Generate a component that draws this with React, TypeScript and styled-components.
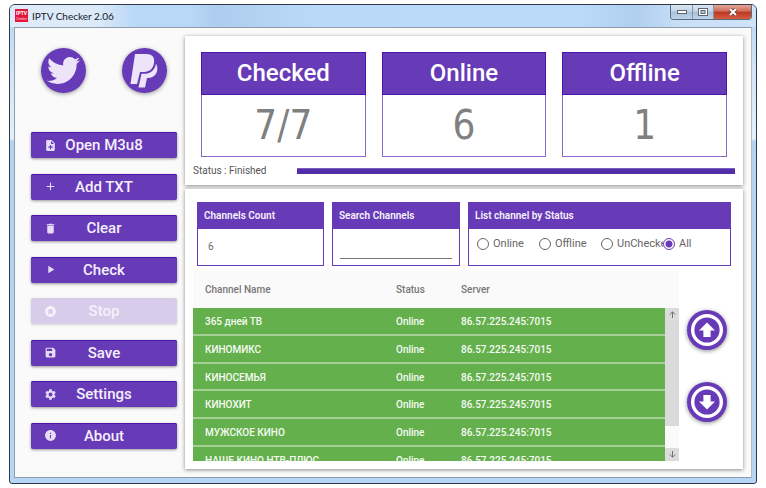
import React from "react";
import styled, { createGlobalStyle, css } from "styled-components";
import {
  MdAdd,
  MdDelete,
  MdInfo,
  MdNoteAdd,
  MdPlayArrow,
  MdSave,
  MdSettings,
  MdStopCircle,
} from "react-icons/md";
import { FaTwitter } from "react-icons/fa";

const purple = "#673ab7";
const edge = "#4c14a8";
const green = "#64b04c";

const GlobalStyle = createGlobalStyle`
  *, *::before, *::after { box-sizing: border-box; }
  body { margin: 0; background: #fff; font-family: Roboto, "Liberation Sans", sans-serif; }
  button, input { font: inherit; }
`;

const Desktop = styled.div`
  height: 100vh;
  padding: 4px 9px;
`;

const Window = styled.div`
  height: 100%;
  display: flex;
  flex-direction: column;
  padding: 0 4px 5px;
  border: 1px solid #2f3a4a;
  border-radius: 6px 6px 3px 3px;
  background: linear-gradient(#c3dcf6 0, #bfdaf5 22px, #d3e5f8 70px, #e4effa 134px, #b4d3f1 136px, #b7d6f5 100%);
`;

const TitleBar = styled.header`
  height: 22px;
  flex: none;
  display: flex;
  align-items: flex-start;
  margin: 0 -4px;
  padding-left: 5px;
  border-radius: 5px 5px 0 0;
  background: linear-gradient(90deg, #dfebf8 0, #dbe9f8 90px, #b9d7f7 125px, #b9d8f8 180px, #aecdee 205px, #bad8f8 300px, #bbdafa 76%, #b0cfef 84%, #c8dff7 90%, #cfe3f8 100%);
`;

const AppBadge = styled.svg`
  width: 13px;
  height: 13px;
  margin-top: 4px;
`;

const Title = styled.h1`
  flex: 1;
  margin: 0 0 0 4px;
  font: 400 10px/22px Lato, "Noto Sans", sans-serif;
  color: #16202c;
`;

const WindowControls = styled.div`
  display: flex;
  margin-right: 4px;
  border: 1px solid #5b6b7e;
  border-top: 0;
  border-radius: 0 0 4px 4px;
  overflow: hidden;
`;

const WindowButton = styled.button<{ $close?: boolean }>`
  width: ${(p) => (p.$close ? 38 : 21)}px;
  height: 14px;
  padding: 0;
  display: grid;
  place-items: center;
  border: 0;
  border-left: 1px solid #8195ab;
  background: ${(p) =>
    p.$close
      ? "linear-gradient(#e3a898, #cf6a56 45%, #bb3620 50%, #d65c42)"
      : "linear-gradient(#dbe7f3, #c4d5e7 45%, #a9bfd7 50%, #bed4ea)"};
  &:first-child { border-left: 0; }
`;

const Client = styled.main`
  flex: 1;
  min-height: 0;
  display: grid;
  grid-template-columns: 146px minmax(0, 1fr);
  gap: 8px;
  padding: 8px 8px 8px 16px;
  border: 1px solid #8f9cab;
  border-right-color: #b3bcc6;
  background: #fafafa;
`;

const Sidebar = styled.nav`
  display: flex;
  flex-direction: column;
  gap: 39px;
  padding: 12px 0 20px;
`;

const SocialRow = styled.div`
  display: flex;
  justify-content: space-between;
  padding: 0 10px;
`;

const SocialButton = styled.button`
  width: 45px;
  height: 45px;
  padding: 0;
  display: grid;
  place-items: center;
  border: 0;
  border-radius: 50%;
  background: ${purple};
  color: #ede4f9;
  box-shadow: 0 1px 4px rgba(0, 0, 0, 0.4);
`;

const Actions = styled.div`
  flex: 1;
  display: flex;
  flex-direction: column;
  justify-content: space-between;
`;

const ActionButton = styled.button`
  height: 26px;
  padding: 0 13px;
  display: grid;
  grid-template-columns: 13px 1fr 13px;
  align-items: center;
  border: 0;
  border-radius: 2px;
  background: ${purple};
  color: #f4effb;
  font-size: 15px;
  font-weight: 500;
  line-height: 24px;
  box-shadow: 0 1px 3px rgba(0, 0, 0, 0.4), inset 0 1px 0 ${edge};
  svg { color: #e6dcf5; }
  &:disabled {
    background: #d7cce9;
    color: #f5f1fb;
    box-shadow: 0 1px 3px rgba(0, 0, 0, 0.15);
    svg { color: #f5f1fb; }
  }
`;

const Content = styled.div`
  min-width: 0;
  min-height: 0;
  display: flex;
  flex-direction: column;
  gap: 4px;
`;

const panel = css`
  background: #fff;
  box-shadow: 0 1px 4px rgba(0, 0, 0, 0.45);
`;

const Summary = styled.section`
  ${panel}
  padding: 16px 8px 6px;
`;

const StatRow = styled.div`
  display: grid;
  grid-template-columns: repeat(3, 1fr);
  gap: 16px;
  padding: 0 8px;
`;

const StatCard = styled.article`
  border: 1px solid #8a69cb;
  text-align: center;
`;

const StatTitle = styled.h2`
  margin: -1px -1px 0;
  border: 1px solid ${edge};
  background: ${purple};
  color: #fff;
  font-size: 24px;
  font-weight: 500;
  line-height: 41px;
`;

const StatValue = styled.p`
  margin: 0;
  color: #808080;
  font: 200 40px/61px "DejaVu Sans Condensed", "DejaVu Sans", sans-serif;
`;

const StatusRow = styled.div`
  display: grid;
  grid-template-columns: 96px 1fr;
  gap: 8px;
  align-items: center;
  padding-top: 6px;
  color: #555;
  font-size: 10px;
  line-height: 16px;
`;

const Progress = styled.div`
  height: 6px;
  background: #512da8;
  border-top: 1px solid #7a5cbd;
`;

const Channels = styled.section`
  ${panel}
  flex: 1;
  min-height: 0;
  display: flex;
  flex-direction: column;
  gap: 4px;
  padding: 13px 8px 8px;
`;

const Filters = styled.div`
  display: grid;
  grid-template-columns: 127px 128px minmax(0, 1fr);
  gap: 8px;
  padding: 0 4px;
`;

const FilterCard = styled.div`
  min-width: 0;
  height: 64px;
  border: 1px solid ${purple};
  color: #666;
  font-size: 11px;
`;

const FilterTitle = styled.h3`
  margin: 0;
  padding: 0 6px;
  background: ${purple};
  color: #f6f2fc;
  font-size: 10px;
  font-weight: 600;
  line-height: 26px;
`;

const Count = styled.output`
  display: block;
  padding: 0 10px;
  font-size: 10px;
  line-height: 36px;
`;

const SearchInput = styled.input`
  display: block;
  width: calc(100% - 14px);
  height: 22px;
  margin: 8px 7px 0;
  padding: 0;
  border: 0;
  border-bottom: 1px solid #777;
  outline: 0;
  background: transparent;
  color: #555;
`;

const RadioGroup = styled.div`
  display: grid;
  grid-template-columns: 62px 62px 62px 1fr;
  padding: 7px 0 0 8px;
`;

const RadioLabel = styled.label`
  display: flex;
  align-items: center;
  gap: 4px;
  overflow: hidden;
  white-space: nowrap;
  line-height: 16px;
`;

const Radio = styled.input`
  appearance: none;
  flex: none;
  width: 12px;
  height: 12px;
  margin: 0;
  border: 1px solid #666;
  border-radius: 50%;
  &:checked {
    border-color: ${purple};
    background: radial-gradient(circle, ${purple} 3px, transparent 4px);
  }
`;

const ListArea = styled.div`
  flex: 1;
  min-height: 0;
  display: grid;
  grid-template-columns: minmax(0, 1fr) 40px;
  grid-template-rows: minmax(0, 1fr);
  gap: 8px;
  padding-right: 8px;
`;

const TableFrame = styled.div`
  min-height: 0;
  display: grid;
  grid-template-columns: minmax(0, 1fr) 14px;
  grid-template-rows: minmax(0, 1fr);
  background: #fafafa;
`;

const TableClip = styled.div`
  overflow: hidden;
`;

const Table = styled.table`
  width: 100%;
  height: 205px;
  table-layout: fixed;
  border-collapse: separate;
  border-spacing: 0;
  font-size: 10px;
  text-align: left;
`;

const HeadCell = styled.th<{ $width?: number }>`
  ${(p) => p.$width && `width: ${p.$width}px;`}
  height: 38px;
  padding: 0 0 0 12px;
  color: #777;
  font-weight: 500;
`;

const Row = styled.tr`
  background: ${green};
`;

const Cell = styled.td`
  padding: 1px 0 0 12px;
  border-bottom: 2px solid #a5cf97;
  color: #f6fbf4;
  font-weight: 500;
  white-space: nowrap;
`;

const ScrollBar = styled.div`
  display: flex;
  flex-direction: column;
  padding-top: 38px;
`;

const ScrollButton = styled.button`
  height: 13px;
  padding: 0;
  display: grid;
  place-items: center;
  border: 0;
  background: #dcdcdc;
`;

const ScrollTrack = styled.div`
  flex: 1;
  background: #fafafa;
`;

const ScrollThumb = styled.div`
  height: 83%;
  background: #dadada;
`;

const MoveButtons = styled.div`
  display: flex;
  flex-direction: column;
  gap: 32px;
  padding-top: 40px;
`;

const MoveButton = styled.button`
  width: 40px;
  height: 40px;
  padding: 0;
  display: grid;
  place-items: center;
  border: 0;
  border-radius: 50%;
  background: ${purple};
  box-shadow: 0 1px 4px rgba(0, 0, 0, 0.45);
`;

const actions = [
  { label: "Open M3u8", Icon: MdNoteAdd },
  { label: "Add TXT", Icon: MdAdd },
  { label: "Clear", Icon: MdDelete },
  { label: "Check", Icon: MdPlayArrow },
  { label: "Stop", Icon: MdStopCircle, disabled: true },
  { label: "Save", Icon: MdSave },
  { label: "Settings", Icon: MdSettings },
  { label: "About", Icon: MdInfo },
];

const stats = [
  { label: "Checked", value: "7/7" },
  { label: "Online", value: "6" },
  { label: "Offline", value: "1" },
];

const channels = ["365 дней ТВ", "КИНОМИКС", "КИНОСЕМЬЯ", "КИНОХИТ", "МУЖСКОЕ КИНО", "НАШЕ КИНО НТВ-ПЛЮС"];

function ArrowDisc({ down }: { down?: boolean }) {
  return (
    <svg width="32" height="32" viewBox="0 0 32 32">
      <circle cx="16" cy="16" r="14.3" fill="none" stroke="#fff" strokeWidth="3.4" />
      <path
        d="M16 8.5 L24 16.5 H19.6 V23 H12.4 V16.5 H8 Z"
        fill="#fff"
        transform={down ? "rotate(180 16 16)" : undefined}
      />
    </svg>
  );
}

function ScrollArrow({ down }: { down?: boolean }) {
  return (
    <svg width="7" height="7" viewBox="0 0 7 7" fill="none" stroke="#707070">
      <path d="M3.5 7 V1 M0.7 3.6 L3.5 0.8 L6.3 3.6" transform={down ? "rotate(180 3.5 3.5)" : undefined} />
    </svg>
  );
}

export default function App() {
  const [filter, setFilter] = React.useState("All");
  return (
    <Desktop>
      <GlobalStyle />
      <Window>
        <TitleBar>
          <AppBadge viewBox="0 0 13 13" aria-hidden="true">
            <rect width="13" height="13" fill="#e2173b" />
            <text x="6.5" y="6" textAnchor="middle" fontFamily="Roboto, sans-serif" fontWeight="700" fontSize="5" fill="#fff">IPTV</text>
            <text x="6.5" y="11" textAnchor="middle" fontFamily="Roboto, sans-serif" fontSize="3" fill="#ffd5dc">Checker</text>
          </AppBadge>
          <Title>IPTV Checker 2.06</Title>
          <WindowControls>
            <WindowButton aria-label="Minimize">
              <svg width="10" height="4" viewBox="0 0 10 4">
                <rect x="0.5" y="0.5" width="9" height="3" fill="#fff" stroke="#5c6672" />
              </svg>
            </WindowButton>
            <WindowButton aria-label="Maximize">
              <svg width="10" height="8" viewBox="0 0 10 8">
                <rect x="0.5" y="0.5" width="9" height="7" fill="#fff" stroke="#5c6672" />
                <rect x="3" y="2.5" width="4" height="3" fill="#b4c6d9" stroke="#5c6672" />
              </svg>
            </WindowButton>
            <WindowButton $close aria-label="Close">
              <svg width="10" height="8" viewBox="0 0 10 8">
                <path d="M2 1 L8 7 M8 1 L2 7" stroke="#6b3a3a" strokeWidth="3.4" />
                <path d="M2 1 L8 7 M8 1 L2 7" stroke="#fff" strokeWidth="2" />
              </svg>
            </WindowButton>
          </WindowControls>
        </TitleBar>
        <Client>
          <Sidebar>
            <SocialRow>
              <SocialButton aria-label="Twitter">
                <FaTwitter size={33} />
              </SocialButton>
              <SocialButton aria-label="PayPal">
                <svg width="29" height="34" viewBox="0 0 29 34" fill="#ede4f9">
                  <path d="M5 0 H16 C22 0 25 3 24 9 C23 16 18 18 13 18 H10 L7 30 H0.5 Z" />
                  <path d="M26 9.500 C29.500 16 26 24 18 24 H17 L15 33.500 H8.500 L11.500 19.800 H14 C20 19.800 25 16.500 26 9.500 Z" />
                </svg>
              </SocialButton>
            </SocialRow>
            <Actions>
              {actions.map(({ label, Icon, disabled }) => (
                <ActionButton key={label} disabled={disabled}>
                  <Icon size={13} aria-hidden="true" />
                  <span>{label}</span>
                </ActionButton>
              ))}
            </Actions>
          </Sidebar>
          <Content>
            <Summary>
              <StatRow>
                {stats.map((s) => (
                  <StatCard key={s.label}>
                    <StatTitle>{s.label}</StatTitle>
                    <StatValue>{s.value}</StatValue>
                  </StatCard>
                ))}
              </StatRow>
              <StatusRow>
                <span>Status : Finished</span>
                <Progress role="progressbar" aria-valuenow={100} aria-label="Progress" />
              </StatusRow>
            </Summary>
            <Channels>
              <Filters>
                <FilterCard>
                  <FilterTitle>Channels Count</FilterTitle>
                  <Count>6</Count>
                </FilterCard>
                <FilterCard>
                  <FilterTitle id="search-title">Search Channels</FilterTitle>
                  <SearchInput type="text" aria-labelledby="search-title" />
                </FilterCard>
                <FilterCard>
                  <FilterTitle id="status-title">List channel by Status</FilterTitle>
                  <RadioGroup role="radiogroup" aria-labelledby="status-title">
                    {["Online", "Offline", "UnChecked", "All"].map((name) => (
                      <RadioLabel key={name}>
                        <Radio type="radio" name="status" checked={filter === name} onChange={() => setFilter(name)} />
                        {name}
                      </RadioLabel>
                    ))}
                  </RadioGroup>
                </FilterCard>
              </Filters>
              <ListArea>
                <TableFrame>
                  <TableClip>
                    <Table>
                      <thead>
                        <tr>
                          <HeadCell $width={191}>Channel Name</HeadCell>
                          <HeadCell $width={65}>Status</HeadCell>
                          <HeadCell>Server</HeadCell>
                        </tr>
                      </thead>
                      <tbody>
                        {channels.map((name) => (
                          <Row key={name}>
                            <Cell>{name}</Cell>
                            <Cell>Online</Cell>
                            <Cell>86.57.225.245:7015</Cell>
                          </Row>
                        ))}
                      </tbody>
                    </Table>
                  </TableClip>
                  <ScrollBar>
                    <ScrollButton aria-label="Scroll up">
                      <ScrollArrow />
                    </ScrollButton>
                    <ScrollTrack>
                      <ScrollThumb />
                    </ScrollTrack>
                    <ScrollButton aria-label="Scroll down">
                      <ScrollArrow down />
                    </ScrollButton>
                  </ScrollBar>
                </TableFrame>
                <MoveButtons>
                  <MoveButton aria-label="Move up">
                    <ArrowDisc />
                  </MoveButton>
                  <MoveButton aria-label="Move down">
                    <ArrowDisc down />
                  </MoveButton>
                </MoveButtons>
              </ListArea>
            </Channels>
          </Content>
        </Client>
      </Window>
    </Desktop>
  );
}
